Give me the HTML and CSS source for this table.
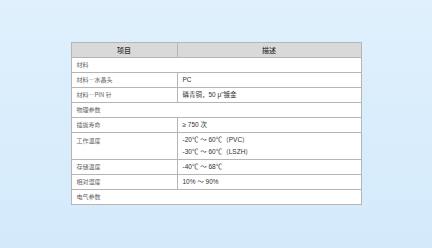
FILE: index.html
```html
<!DOCTYPE html>
<html lang="zh">
<head>
<meta charset="utf-8">
<link rel="stylesheet" href="styles.css">
</head>
<body>
<div class="stage">
<table class="spec">
  <thead>
    <tr><th class="c1">项目</th><th class="c2">描述</th></tr>
  </thead>
  <tbody>
    <tr><td colspan="2">材料</td></tr>
    <tr><td>材料—水晶头</td><td class="d">PC</td></tr>
    <tr><td>材料—PIN 针</td><td class="d">磷青铜，50 μ"镀金</td></tr>
    <tr><td colspan="2">物理参数</td></tr>
    <tr><td>插拔寿命</td><td class="d">≥ 750 次</td></tr>
    <tr class="tall"><td>工作温度</td><td class="d"><div>-20℃ ～ 60℃（PVC）</div><div>-30℃ ～ 60℃（LSZH）</div></td></tr>
    <tr><td>存储温度</td><td class="d">-40℃ ～ 68℃</td></tr>
    <tr><td>相对湿度</td><td class="d">10% ～ 90%</td></tr>
    <tr><td colspan="2">电气参数</td></tr>
  </tbody>
</table>
</div>
</body>
</html>
```
FILE: styles.css
```css
html, body {
  margin: 0;
  padding: 0;
  width: 432px;
  height: 248px;
  overflow: hidden;
}
body {
  background: linear-gradient(180deg, #e0f0fd 0%, #d8ecfb 60%, #d4eafb 100%);
  font-family: "Noto Sans CJK SC", "Liberation Sans", sans-serif;
}
.stage {
  display: flex;
  justify-content: center;
  padding-top: 42px;
}
.spec {
  width: 291px;
  border-collapse: collapse;
  background: #fff;
  font-size: 6px;
  color: #666;
}
.spec th, .spec td {
  border: 1px solid #b5b5b5;
  height: 14px;
  padding: 0 5px;
  line-height: 14px;
  text-align: left;
  vertical-align: top;
}
.spec th {
  background: #d9d9d9;
  text-align: center;
  color: #333;
  font-size: 7px;
  font-weight: 500;
}
.spec .c1 { width: 95px; }
.spec td.d {
  font-family: "Liberation Sans", "Noto Sans CJK SC", sans-serif;
  font-size: 6.5px;
  color: #333;
}
.spec tr.tall td {
  height: 25px;
  padding-top: 1px;
}
.spec tr.tall td.d div {
  line-height: 12px;
}
```
